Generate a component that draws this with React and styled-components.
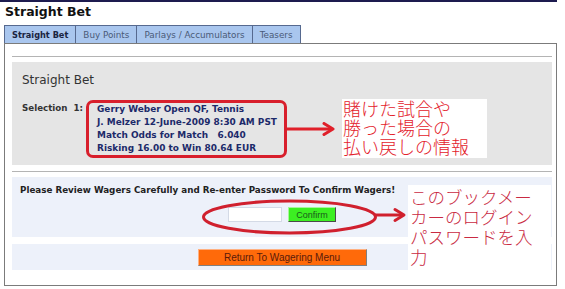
import styled, { createGlobalStyle } from 'styled-components';

const GlobalStyle = createGlobalStyle`
  html, body {
    margin: 0;
    padding: 0;
    background: #fff;
  }
  body {
    font-family: "DejaVu Sans", Verdana, sans-serif;
    color: #222;
  }
`;

const Page = styled.div`
  width: 557px;
  padding-left: 4px;
  box-sizing: border-box;
  border-top: 2px solid #1d1b4f;
`;

const Title = styled.h1`
  margin: 2px 0 0 1px;
  font-size: 12.5px;
  line-height: 16px;
  font-weight: bold;
  color: #111;
`;

const TabBar = styled.div`
  display: flex;
  margin-top: 5px;
`;

const Tab = styled.div`
  height: 18px;
  box-sizing: border-box;
  padding: 0 7px;
  display: flex;
  align-items: center;
  background: #a9c6ee;
  border: 1px solid #56698f;
  border-bottom: none;
  font-size: ${p => (p.$active ? '8.2px' : '8.8px')};
  font-weight: ${p => (p.$active ? 'bold' : 'normal')};
  color: ${p => (p.$active ? '#1a2440' : '#4a5a78')};
  white-space: nowrap;

  & + & {
    border-left: none;
  }
`;

const Panel = styled.div`
  width: 553px;
  box-sizing: border-box;
  border: 1px solid #7b7b7b;
  padding: 12px 4px 15px 7px;
`;

const Rule = styled.div`
  height: 1px;
  background: #b4b4b4;
  margin-top: ${p => p.$gap || 0}px;
`;

const Summary = styled.div`
  margin-top: 5px;
  height: 103px;
  box-sizing: border-box;
  padding: 11px 10px 0;
  background: #e5e5e5;
`;

const SummaryHeading = styled.div`
  font-size: 12px;
  line-height: 15px;
  color: #333;
`;

const SelectionRow = styled.div`
  display: flex;
  align-items: center;
  margin-top: 11px;
`;

const SelectionLabel = styled.div`
  align-self: flex-start;
  width: 64px;
  padding-top: 3px;
  font-size: 8.7px;
  line-height: 13px;
  font-weight: bold;
  color: #333;
  white-space: pre;
`;

const Details = styled.div`
  width: 201px;
  box-sizing: border-box;
  border: 3px solid #d81f2c;
  border-radius: 7px;
  padding: 0 3px 0 8px;
  font-size: 8.95px;
  line-height: 13px;
  font-weight: bold;
  color: #1c2a6a;
  white-space: pre;
`;

const Note = styled.div`
  box-sizing: border-box;
  background: #fff;
  font-family: "Noto Sans CJK JP", sans-serif;
  font-weight: 300;
  white-space: pre;
`;

const BetNote = styled(Note)`
  margin-left: 7px;
  width: 145px;
  height: 59px;
  padding-left: 1px;
  font-size: 18px;
  line-height: 19px;
  color: #e3212b;
`;

const LoginNote = styled(Note)`
  position: absolute;
  top: 8px;
  left: 396px;
  width: 143px;
  height: 87px;
  padding: 2px 0 0 2px;
  font-size: 17.5px;
  line-height: 20px;
  color: #c92a42;
`;

const Lower = styled.div`
  position: relative;
  margin-top: 5px;
`;

const Section = styled.div`
  background: #edf1fa;
  box-sizing: border-box;
`;

const ConfirmSection = styled(Section)`
  height: 60px;
  padding: 7px 8px 0;
`;

const Prompt = styled.div`
  font-size: 8.75px;
  line-height: 13px;
  font-weight: bold;
  color: #222;
  white-space: nowrap;
`;

const InputRow = styled.div`
  display: flex;
  justify-content: center;
  margin-top: 10px;
`;

const InputGroup = styled.div`
  position: relative;
  display: flex;
  gap: 6px;
`;

const PasswordInput = styled.input`
  width: 54px;
  height: 15px;
  box-sizing: border-box;
  padding: 0;
  border: 1px solid #d4dae6;
  background: #fff;
`;

const ConfirmButton = styled.button`
  width: 48px;
  height: 15px;
  padding: 0;
  box-sizing: border-box;
  background: #3cef22;
  border: 1px solid;
  border-color: #a6f79a #4a4a4a #4a4a4a #a6f79a;
  font-family: "Liberation Sans", Arial, sans-serif;
  font-size: 9px;
  color: #1a5a1a;
`;

const Ellipse = styled.svg`
  position: absolute;
  left: -26px;
  top: -8px;
  overflow: visible;
  pointer-events: none;
`;

const ReturnSection = styled(Section)`
  margin-top: 7px;
  height: 26px;
  display: flex;
  align-items: center;
  justify-content: center;
`;

const ReturnButton = styled.button`
  width: 169px;
  height: 17px;
  padding: 0;
  box-sizing: border-box;
  background: #ff6a0a;
  border: 1px solid;
  border-color: #ffb080 #808080 #808080 #ffb080;
  font-family: "Liberation Sans", Arial, sans-serif;
  font-size: 10px;
  color: #5a1a0a;
`;

const Arrow = ({ width, color }) => (
  <svg width={width} height="14" viewBox={`0 0 ${width} 14`}>
    <line x1="0" y1="7" x2={width - 3} y2="7" stroke={color} strokeWidth="3" />
    <path
      d={`M${width - 11} 1.5 L${width - 2} 7 L${width - 11} 12.5`}
      fill="none"
      stroke={color}
      strokeWidth="3"
      strokeLinecap="round"
      strokeLinejoin="round"
    />
  </svg>
);

export default function App() {
  return (
    <>
      <GlobalStyle />
      <Page>
        <Title>Straight Bet</Title>
        <TabBar>
          <Tab $active>Straight Bet</Tab>
          <Tab>Buy Points</Tab>
          <Tab>Parlays / Accumulators</Tab>
          <Tab>Teasers</Tab>
        </TabBar>
        <Panel>
          <Rule />
          <Summary>
            <SummaryHeading>Straight Bet</SummaryHeading>
            <SelectionRow>
              <SelectionLabel>{'Selection  1:'}</SelectionLabel>
              <Details>
                {'Gerry Weber Open QF, Tennis\nJ. Melzer 12-June-2009 8:30 AM PST\nMatch Odds for Match   6.040\nRisking 16.00 to Win 80.64 EUR'}
              </Details>
              <Arrow width={48} color="#e0202a" />
              <BetNote>{'賭けた試合や\n勝った場合の\n払い戻しの情報'}</BetNote>
            </SelectionRow>
          </Summary>
          <Rule $gap={6} />
          <Lower>
            <ConfirmSection>
              <Prompt>Please Review Wagers Carefully and Re-enter Password To Confirm Wagers!</Prompt>
              <InputRow>
                <InputGroup>
                  <PasswordInput type="password" />
                  <ConfirmButton>Confirm</ConfirmButton>
                  <Ellipse width="210" height="38" viewBox="0 0 210 38">
                    <ellipse cx="87.5" cy="18" rx="86" ry="16" fill="none" stroke="#d0202e" strokeWidth="3" />
                    <line x1="173" y1="16" x2="201" y2="16" stroke="#d0202e" strokeWidth="3" />
                    <path d="M193 10.5 L202 16 L193 21.5" fill="none" stroke="#d0202e" strokeWidth="3" strokeLinecap="round" strokeLinejoin="round" />
                  </Ellipse>
                </InputGroup>
              </InputRow>
            </ConfirmSection>
            <ReturnSection>
              <ReturnButton>Return To Wagering Menu</ReturnButton>
            </ReturnSection>
            <LoginNote>{'このブックメー\nカーのログイン\nパスワードを入\n力'}</LoginNote>
          </Lower>
        </Panel>
      </Page>
    </>
  );
}
